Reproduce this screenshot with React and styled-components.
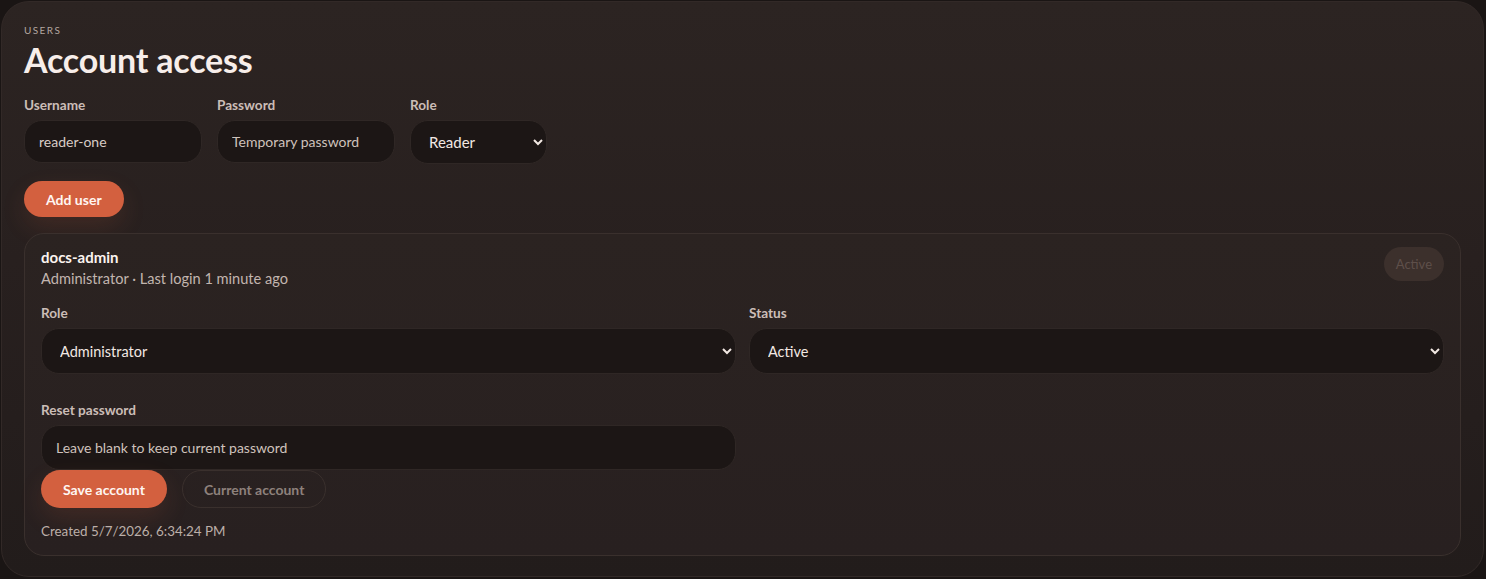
import React from "react";
import styled, { createGlobalStyle } from "styled-components";

const Global = createGlobalStyle`
  html, body { margin: 0; padding: 0; background: #1a1514; }
  body { font-family: Lato, "Noto Sans", sans-serif; color: #f3e9e4; }
  * { box-sizing: border-box; }
`;

const Page = styled.div`
  padding: 1px 2px 2px 1px;
  height: 579px;
`;

const Panel = styled.section`
  height: 576px;
  border-radius: 28px;
  border: 1px solid #322927;
  background: linear-gradient(180deg, #2c2422 0%, #28201f 45%, #221c1b 100%);
  padding: 22px 22px 21px 22px;
  display: flex;
  flex-direction: column;
`;

const Eyebrow = styled.div`
  font-size: 10px;
  line-height: 12px;
  letter-spacing: 1.4px;
  text-transform: uppercase;
  color: #b3a6a0;
`;

const Title = styled.h1`
  margin: 4px 0 0;
  font-size: 34px;
  line-height: 40px;
  font-weight: 700;
  color: #f7eeea;
  letter-spacing: -0.2px;
`;

const FormRow = styled.div`
  display: flex;
  gap: 15px;
  margin-top: 17px;
`;

const Field = styled.label`
  display: flex;
  flex-direction: column;
  gap: 7px;
`;

const Label = styled.span`
  font-size: 13.6px;
  line-height: 16px;
  font-weight: 700;
  color: #cbbdb7;
`;

const Input = styled.input`
  width: ${(p) => p.$w || "100%"};
  height: ${(p) => p.$h || 43}px;
  border-radius: 18px;
  border: 1px solid #2f2725;
  background: #1c1615;
  color: #d8ccc6;
  font-family: Lato, sans-serif;
  font-size: 14px;
  padding: 0 14px;
  outline: none;
  &::placeholder { color: #cfc2bc; opacity: 1; }
`;

const Select = styled.select`
  width: ${(p) => p.$w || "100%"};
  height: ${(p) => p.$h || 46}px;
  border-radius: 18px;
  border: 1px solid #2f2725;
  background-color: #1c1615;
  color: #f2e8e3;
  color-scheme: dark;
  font-family: Lato, sans-serif;
  font-size: ${(p) => p.$fs || 14.5}px;
  padding: 0 8px 0 14px;
  outline: none;
`;

const Button = styled.button`
  height: ${(p) => p.$h || 38}px;
  padding: 0 ${(p) => p.$px || 21}px;
  border-radius: 999px;
  font-family: Lato, sans-serif;
  font-weight: 700;
  font-size: 14px;
  cursor: pointer;
  ${(p) =>
    p.$variant === "ghost"
      ? `
    background: transparent;
    border: 1px solid #3a302d;
    color: #8e817c;
  `
      : `
    background: #d3603f;
    border: none;
    color: #fff6f2;
    box-shadow: 0 10px 24px rgba(211, 96, 63, 0.14);
  `}
`;

const AddRow = styled.div`
  margin-top: 17px;
  display: flex;
`;

const Card = styled.article`
  margin-top: 16px;
  border: 1px solid #3a302d;
  border-radius: 20px;
  background: linear-gradient(180deg, #2b2321 0%, #282020 100%);
  padding: 13px 16px 16px;
  display: flex;
  flex-direction: column;
`;

const CardHead = styled.div`
  display: flex;
  justify-content: space-between;
  align-items: flex-start;
`;

const Name = styled.div`
  font-size: 15px;
  line-height: 18px;
  font-weight: 700;
  color: #fbf3ef;
  margin-top: 1px;
`;

const Meta = styled.div`
  margin-top: 4px;
  font-size: 14.6px;
  line-height: 18px;
  color: #c2b5af;
`;

const Badge = styled.button`
  height: 34px;
  padding: 0 12px;
  border-radius: 999px;
  border: none;
  background: #3c302c;
  color: #5e4f4a;
  font-family: Lato, sans-serif;
  font-size: 13px;
`;

const Grid = styled.div`
  display: grid;
  grid-template-columns: 1fr 1fr;
  column-gap: 13px;
  margin-top: ${(p) => p.$mt || 0}px;
`;

const Actions = styled.div`
  display: flex;
  gap: 15px;
`;

const Created = styled.div`
  margin-top: 15px;
  font-size: 13.4px;
  line-height: 16px;
  color: #bcafa9;
`;

export default function App() {
  return (
    <Page>
      <Global />
      <Panel>
        <Eyebrow>Users</Eyebrow>
        <Title>Account access</Title>
        <FormRow>
          <Field>
            <Label>Username</Label>
            <Input $w="178px" defaultValue="reader-one" />
          </Field>
          <Field>
            <Label>Password</Label>
            <Input $w="178px" placeholder="Temporary password" />
          </Field>
          <Field>
            <Label>Role</Label>
            <Select $w="137px" $h={44} $fs={15} defaultValue="reader">
              <option value="reader">Reader</option>
              <option value="editor">Editor</option>
              <option value="admin">Administrator</option>
            </Select>
          </Field>
        </FormRow>
        <AddRow>
          <Button $h={36} $px={22}>Add user</Button>
        </AddRow>
        <Card>
          <CardHead>
            <div>
              <Name>docs-admin</Name>
              <Meta>Administrator · Last login 1 minute ago</Meta>
            </div>
            <Badge disabled>Active</Badge>
          </CardHead>
          <Grid $mt={17}>
            <Field>
              <Label>Role</Label>
              <Select defaultValue="admin">
                <option value="reader">Reader</option>
                <option value="editor">Editor</option>
                <option value="admin">Administrator</option>
              </Select>
            </Field>
            <Field>
              <Label>Status</Label>
              <Select defaultValue="active">
                <option value="active">Active</option>
                <option value="disabled">Disabled</option>
              </Select>
            </Field>
          </Grid>
          <Grid $mt={28}>
            <Field>
              <Label>Reset password</Label>
              <Input $h={45} placeholder="Leave blank to keep current password" />
            </Field>
          </Grid>
          <Actions>
            <Button $h={38} $px={22}>Save account</Button>
            <Button $variant="ghost" $h={38} $px={21}>Current account</Button>
          </Actions>
          <Created>Created 5/7/2026, 6:34:24 PM</Created>
        </Card>
      </Panel>
    </Page>
  );
}
